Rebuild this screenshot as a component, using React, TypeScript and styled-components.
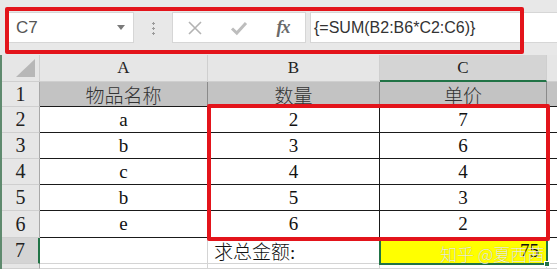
import React from 'react'
import styled, { createGlobalStyle } from 'styled-components'

const GlobalStyle = createGlobalStyle`
	html, body {
		margin: 0;
		padding: 0;
		background: #e8e8e8;
	}
	* {
		box-sizing: border-box;
	}
`

const RED = '#e3141b'
const GREEN = '#217346'

const rows = [
	{ a: 'a', b: '2', c: '7' },
	{ a: 'b', b: '3', c: '6' },
	{ a: 'c', b: '4', c: '4' },
	{ a: 'b', b: '5', c: '3' },
	{ a: 'e', b: '6', c: '2' },
]

export default function App() {
	return (
		<Page>
			<GlobalStyle />
			<FormulaBar>
				<NameBox>
					<span>C7</span>
					<DropArrow />
				</NameBox>
				<Splitter>
					<Dots />
				</Splitter>
				<ActionBox>
					<IconSlot>
						<svg width='16' height='16' viewBox='0 0 16 16'>
							<path d='M2 2 L14 14 M14 2 L2 14' stroke='#b3b3b3' strokeWidth='1.6' fill='none' />
						</svg>
					</IconSlot>
					<IconSlot>
						<svg width='18' height='16' viewBox='0 0 18 16'>
							<path d='M2 8.5 L6.8 13 L16 3' stroke='#bdbdbd' strokeWidth='3' fill='none' />
						</svg>
					</IconSlot>
					<IconSlot>
						<FxLabel>fx</FxLabel>
					</IconSlot>
				</ActionBox>
				<FormulaBox>{'{=SUM(B2:B6*C2:C6)}'}</FormulaBox>
				<Highlight $top={7} $left={5} $width={519} $height={47} />
			</FormulaBar>

			<Sheet>
				<Corner />
				<ColHead>A</ColHead>
				<ColHead>B</ColHead>
				<ColHead $active>C</ColHead>
				<ColHead />

				<RowHead>1</RowHead>
				<Cell $kind='title' $boxed>物品名称</Cell>
				<Cell $kind='title' $boxed>数量</Cell>
				<Cell $kind='title' $boxed>单价</Cell>
				<Cell $kind='title' $boxed />

				{rows.map((r, i) => (
					<React.Fragment key={i}>
						<RowHead>{i + 2}</RowHead>
						<Cell $boxed>{r.a}</Cell>
						<Cell $boxed>{r.b}</Cell>
						<Cell $boxed>{r.c}</Cell>
						<Cell $boxed />
					</React.Fragment>
				))}

				<RowHead $active>7</RowHead>
				<Cell />
				<Cell $align='left'>求总金额:</Cell>
				<Cell $kind='selected' $align='right'>
					75
					<FillHandle />
				</Cell>
				<Cell />

				<RowHead />
				<Cell />
				<Cell />
				<Cell />
				<Cell />

				<Highlight $top={49} $left={205} $width={343} $height={137} />
				<Watermark>知乎 @夏西茜</Watermark>
			</Sheet>
		</Page>
	)
}

const Page = styled.div`
	width: 557px;
	height: 269px;
	overflow: hidden;
	background: #e8e8e8;
	font-family: 'Liberation Sans', 'Noto Sans CJK SC', sans-serif;
`

const FormulaBar = styled.div`
	position: relative;
	height: 55px;
	display: flex;
	align-items: center;
	padding: 12px 0 12px 8px;
	background: #e8e8e8;
`

const NameBox = styled.div`
	display: flex;
	align-items: center;
	justify-content: space-between;
	width: 126px;
	height: 31px;
	padding: 0 7px 0 7px;
	background: #fff;
	border: 1px solid #d6d6d6;
	color: #555;
	font-size: 17px;
`

const DropArrow = styled.span`
	width: 0;
	height: 0;
	border-left: 4px solid transparent;
	border-right: 4px solid transparent;
	border-top: 5px solid #7a7a7a;
	margin-right: 1px;
`

const Splitter = styled.div`
	width: 38px;
	height: 31px;
	display: flex;
	align-items: center;
	justify-content: center;
`

const Dots = styled.span`
	width: 3px;
	height: 14px;
	background: radial-gradient(circle, #9a9a9a 1.2px, transparent 1.4px) 0 0 / 3px 5px repeat-y;
`

const ActionBox = styled.div`
	display: flex;
	align-items: center;
	width: 134px;
	height: 31px;
	background: #fff;
	border: 1px solid #d6d6d6;
`

const IconSlot = styled.span`
	display: flex;
	align-items: center;
	justify-content: center;
	width: 46px;
	height: 100%;
`

const FxLabel = styled.span`
	font-family: 'Liberation Serif', serif;
	font-style: italic;
	font-weight: bold;
	font-size: 18px;
	color: #6a6a6a;
	letter-spacing: -1px;
`

const FormulaBox = styled.div`
	flex: 1;
	height: 31px;
	margin-left: 4px;
	display: flex;
	align-items: center;
	padding-left: 3px;
	background: #fff;
	border: 1px solid #d6d6d6;
	border-right: none;
	color: #333;
	font-size: 16px;
`

const Highlight = styled.div<{ $top: number; $left: number; $width: number; $height: number }>`
	position: absolute;
	top: ${(p) => p.$top}px;
	left: ${(p) => p.$left}px;
	width: ${(p) => p.$width}px;
	height: ${(p) => p.$height}px;
	border: 4px solid ${RED};
	border-radius: 2px;
	pointer-events: none;
	z-index: 3;
`

const Sheet = styled.div`
	position: relative;
	display: grid;
	grid-template-columns: 38px 168px 172px 167px 1fr;
	grid-template-rows: 27px 25px 26px 26px 26px 26px 27px 26px 1fr;
	height: 214px;
	background: #fff;
	border-left: 2px solid #5f8a6e;
	font-family: 'Liberation Serif', 'Noto Sans CJK SC', serif;
`

const Corner = styled.div`
	position: relative;
	background: #e6e6e6;
	border-right: 1px solid #cfcfcf;
	border-bottom: 1px solid #cfcfcf;
	&::after {
		content: '';
		position: absolute;
		right: 4px;
		bottom: 4px;
		width: 19px;
		height: 18px;
		background: #b7b7b7;
		clip-path: polygon(100% 0, 100% 100%, 0 100%);
	}
`

const ColHead = styled.div<{ $active?: boolean }>`
	display: flex;
	align-items: center;
	justify-content: center;
	background: ${(p) => (p.$active ? '#d4d4d4' : '#e6e6e6')};
	border-right: 1px solid #cfcfcf;
	border-bottom: ${(p) => (p.$active ? `2px solid ${GREEN}` : '1px solid #cfcfcf')};
	color: #222;
	font-size: 17px;
`

const RowHead = styled.div<{ $active?: boolean }>`
	display: flex;
	align-items: center;
	justify-content: center;
	background: ${(p) => (p.$active ? '#d4d4d4' : '#e6e6e6')};
	border-right: ${(p) => (p.$active ? `2px solid ${GREEN}` : '1px solid #a8a8a8')};
	border-bottom: 1px solid #cfcfcf;
	color: #222;
	font-size: 20px;
`

const Cell = styled.div<{ $kind?: 'title' | 'selected'; $boxed?: boolean; $align?: 'left' | 'right' }>`
	position: relative;
	display: flex;
	align-items: center;
	justify-content: ${(p) =>
		p.$align === 'left' ? 'flex-start' : p.$align === 'right' ? 'flex-end' : 'center'};
	padding: 0 6px;
	overflow: visible;
	white-space: nowrap;
	font-size: 19px;
	font-weight: 300;
	color: #111;
	background: ${(p) =>
		p.$kind === 'title' ? '#c3c3c3' : p.$kind === 'selected' ? '#ffff00' : '#fff'};
	border-right: 1px solid ${(p) => (p.$boxed ? '#1a1a1a' : '#d4d4d4')};
	border-bottom: 1px solid ${(p) => (p.$boxed ? '#1a1a1a' : '#d4d4d4')};
	${(p) =>
		p.$kind === 'title' &&
		`border-right-color: #8a8a8a; color: #333;`}
	${(p) =>
		p.$kind === 'selected' &&
		`outline: 2px solid ${GREEN}; outline-offset: -1px; z-index: 2; padding-right: 7px;`}
`

const FillHandle = styled.span`
	position: absolute;
	right: -4px;
	bottom: -4px;
	width: 6px;
	height: 6px;
	background: ${GREEN};
	border: 1px solid #fff;
`

const Watermark = styled.div`
	position: absolute;
	left: 438px;
	top: 186px;
	z-index: 4;
	font-family: 'Noto Sans CJK SC', sans-serif;
	font-size: 17px;
	font-weight: 300;
	color: rgba(255, 255, 255, 0.85);
	text-shadow: 0 0 1px rgba(0, 0, 0, 0.35);
	pointer-events: none;
`
